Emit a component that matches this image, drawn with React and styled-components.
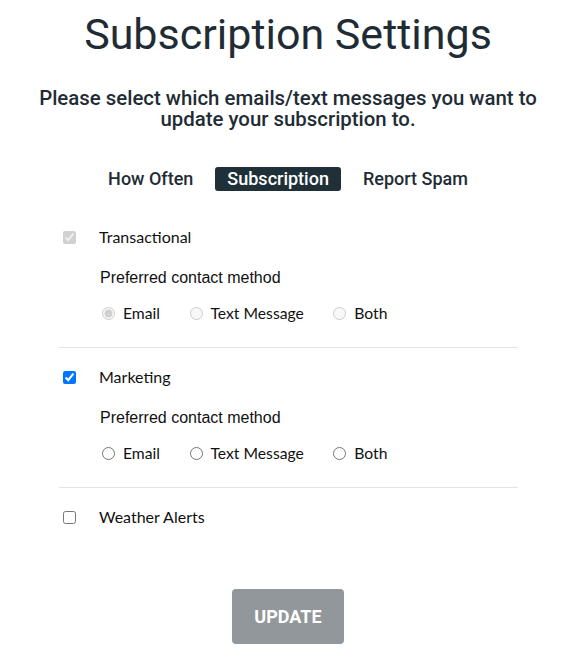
import React, { useState } from 'react';
import styled, { createGlobalStyle } from 'styled-components';

const GlobalStyle = createGlobalStyle`
  body {
    margin: 0;
    background: #ffffff;
    font-family: 'Lato', sans-serif;
  }
`;

const Page = styled.div`
  display: flex;
  flex-direction: column;
  align-items: center;
  padding: 7px 0 0 4px;
`;

const Title = styled.h1`
  margin: 0;
  font-family: 'Roboto', sans-serif;
  font-weight: 400;
  font-size: 43px;
  line-height: 54px;
  color: #1f2c35;
`;

const Subtitle = styled.p`
  margin: 27px 0 0;
  font-family: 'Roboto', sans-serif;
  font-weight: 500;
  font-size: 20.4px;
  line-height: 21px;
  color: #1f2c35;
  text-align: center;
  max-width: 520px;
`;

const Tabs = styled.div`
  display: flex;
  align-items: center;
  gap: 22px;
  margin-top: 37px;
`;

const Tab = styled.button`
  border: none;
  background: ${(p) => (p.$active ? '#1f3038' : 'transparent')};
  color: ${(p) => (p.$active ? '#ffffff' : '#1f2c35')};
  font-family: 'Roboto', sans-serif;
  font-weight: 500;
  font-size: 18px;
  line-height: 24px;
  padding: 0 ${(p) => (p.$active ? '12px' : '0')};
  border-radius: 3px;
  cursor: pointer;
`;

const List = styled.div`
  align-self: stretch;
  display: flex;
  flex-direction: column;
  margin: 17px 54px 0 55px;
`;

const Section = styled.div`
  display: flex;
  flex-direction: column;
  padding: 19px 0 24px;
  border-bottom: ${(p) => (p.$last ? 'none' : '1px solid #e3e3e3')};
`;

const CheckRow = styled.label`
  display: flex;
  align-items: center;
  gap: 23px;
  font-size: 16px;
  line-height: 20px;
  color: #111;
  input {
    margin: 0 0 0 4px;
    width: 13px;
    height: 13px;
  }
`;

const Group = styled.div`
  display: flex;
  flex-direction: column;
  padding-left: 41px;
  margin-top: 22px;
`;

const GroupTitle = styled.div`
  font-family: 'Liberation Sans', Arial, sans-serif;
  font-size: 16px;
  line-height: 18px;
  color: #111;
`;

const Radios = styled.div`
  display: flex;
  gap: 27.5px;
  margin-top: 16px;
`;

const RadioLabel = styled.label`
  display: flex;
  align-items: center;
  gap: 8px;
  font-size: 15.7px;
  line-height: 20px;
  color: #111;
  input {
    margin: 0 0 0 2px;
    width: 13px;
    height: 13px;
  }
`;

const UpdateButton = styled.button`
  margin-top: 38px;
  width: 112px;
  height: 55px;
  border: none;
  border-radius: 4px;
  background: #92979c;
  color: #ffffff;
  font-family: 'Roboto', sans-serif;
  font-weight: 700;
  font-size: 18px;
  cursor: default;
`;

const methods = ['Email', 'Text Message', 'Both'];

const ContactGroup = ({ name, value, disabled, onChange }) => (
  <Group>
    <GroupTitle>Preferred contact method</GroupTitle>
    <Radios>
      {methods.map((m) => (
        <RadioLabel key={m}>
          <input
            type="radio"
            name={name}
            checked={value === m}
            disabled={disabled}
            onChange={() => onChange && onChange(m)}
          />
          {m}
        </RadioLabel>
      ))}
    </Radios>
  </Group>
);

export default function App() {
  const [marketing, setMarketing] = useState(true);
  const [weather, setWeather] = useState(false);
  const [marketingMethod, setMarketingMethod] = useState('');

  return (
    <Page>
      <GlobalStyle />
      <Title>Subscription Settings</Title>
      <Subtitle>
        Please select which emails/text messages you want to update your
        subscription to.
      </Subtitle>
      <Tabs>
        <Tab>How Often</Tab>
        <Tab $active>Subscription</Tab>
        <Tab>Report Spam</Tab>
      </Tabs>
      <List>
        <Section>
          <CheckRow>
            <input type="checkbox" checked disabled readOnly />
            Transactional
          </CheckRow>
          <ContactGroup name="transactional" value="Email" disabled />
        </Section>
        <Section>
          <CheckRow>
            <input
              type="checkbox"
              checked={marketing}
              onChange={(e) => setMarketing(e.target.checked)}
            />
            Marketing
          </CheckRow>
          <ContactGroup
            name="marketing"
            value={marketingMethod}
            onChange={setMarketingMethod}
          />
        </Section>
        <Section $last>
          <CheckRow>
            <input
              type="checkbox"
              checked={weather}
              onChange={(e) => setWeather(e.target.checked)}
            />
            Weather Alerts
          </CheckRow>
        </Section>
      </List>
      <UpdateButton>UPDATE</UpdateButton>
    </Page>
  );
}
